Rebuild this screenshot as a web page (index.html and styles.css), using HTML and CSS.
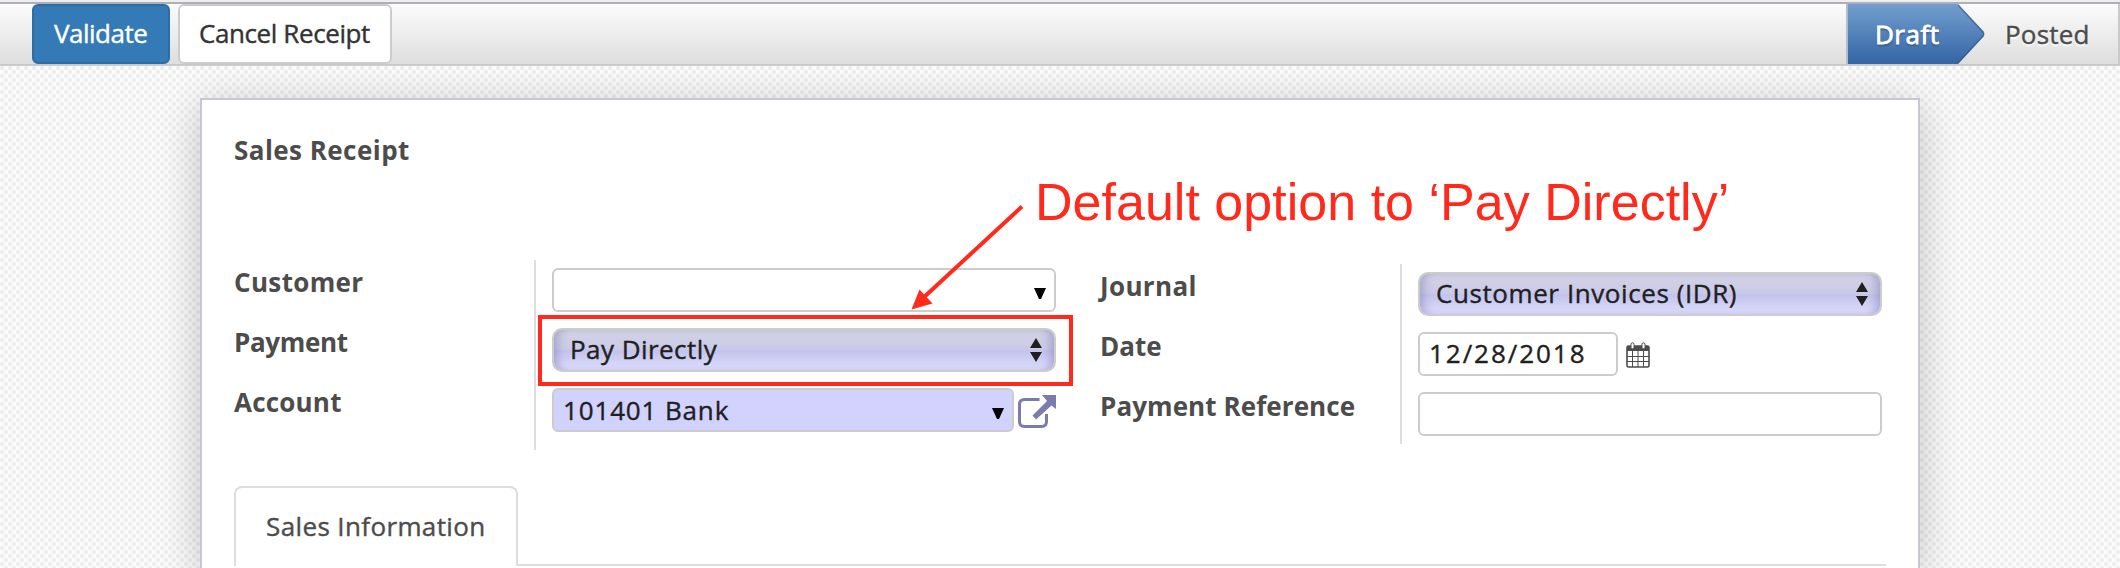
FILE: index.html
```
<!DOCTYPE html>
<html lang="en">
<head>
<meta charset="utf-8">
<title>Sales Receipt</title>
<link rel="stylesheet" href="styles.css">
</head>
<body>
<header class="toolbar">
  <div class="actions">
    <button class="btn btn-primary"><span class="t-validate">Validate</span></button>
    <button class="btn"><span class="t-cancel">Cancel Receipt</span></button>
  </div>
  <div class="status">
    <div class="stage stage-active"><span class="t-draft">Draft</span>
      <svg class="stage-arrow" width="28" height="60" viewBox="0 0 28 60">
        <defs><linearGradient id="stage" x1="0" y1="0" x2="0" y2="1"><stop offset="0" stop-color="#729fcf"/><stop offset="1" stop-color="#3465a4"/></linearGradient></defs>
        <path d="M0 0 25.500 27.500Q27 30 25.500 32.500L0 60Z" fill="url(#stage)"/>
        <path d="M0 1 25 28Q26.500 30 25 32L0 59" fill="none" stroke="#2c4f7c" stroke-opacity=".55" stroke-width="1.500"/>
      </svg>
    </div>
    <div class="stage stage-next"><span class="t-posted">Posted</span></div>
  </div>
</header>
<main class="page">
  <section class="sheet">
    <h1 class="title"><span class="t-title">Sales Receipt</span></h1>
    <div class="groups">
      <div class="group group-left">
        <div class="labels">
          <label><span class="t-customer">Customer</span></label>
          <label><span class="t-payment">Payment</span></label>
          <label><span class="t-account">Account</span></label>
        </div>
        <div class="fields">
          <div class="field field-end"><svg class="caret" width="14" height="13" viewBox="0 0 14 13"><path d="M1 1H13L8 12H6Z"/></svg></div>
          <div class="field select"><span class="t-pay">Pay Directly</span><svg class="updown" width="12" height="24" viewBox="0 0 12 24"><path d="M6 0 12 10H0ZM0 14H12L6 24Z"/></svg></div>
          <div class="row">
            <div class="field field-required"><span class="t-bank">101401 Bank</span><svg class="caret" width="14" height="13" viewBox="0 0 14 13"><path d="M1 1H13L8 12H6Z"/></svg></div>
            <svg class="open" width="38" height="34" viewBox="0 0 38 34"><path d="M21.500 4.500H6.500Q1.500 4.500 1.500 9.500V26.500Q1.500 31.500 6.500 31.500H23.500Q28.500 31.500 28.500 26.500V19" fill="none" stroke="#7c7bad" stroke-width="3"/><path d="M24 0H38V14L33.500 10.500 18 24.500 14.500 20.500 29 6Z" fill="#7c7bad"/></svg>
          </div>
        </div>
      </div>
      <div class="group group-right">
        <div class="labels">
          <label><span class="t-journal">Journal</span></label>
          <label><span class="t-date">Date</span></label>
          <label><span class="t-ref">Payment Reference</span></label>
        </div>
        <div class="fields">
          <div class="field select"><span class="t-invoices">Customer Invoices (IDR)</span><svg class="updown" width="12" height="24" viewBox="0 0 12 24"><path d="M6 0 12 10H0ZM0 14H12L6 24Z"/></svg></div>
          <div class="row">
            <div class="field field-date"><span class="t-day">12/28/2018</span></div>
            <svg class="calendar" width="24" height="26" viewBox="0 0 24 26"><rect x="1" y="4" width="22" height="21" rx="1.500" fill="#fff" stroke="#4c4c4c" stroke-width="1.600"/><path d="M1 4H23V9H1Z" fill="#4c4c4c"/><path d="M6.500 9V25M12 9V25M17.500 9V25M1 14.500H23M1 19.500H23" stroke="#4c4c4c"/><rect x="5" y=".8" width="3" height="6" rx="1.500" fill="#fff" stroke="#4c4c4c"/><rect x="16" y=".8" width="3" height="6" rx="1.500" fill="#fff" stroke="#4c4c4c"/></svg>
          </div>
          <div class="field"></div>
        </div>
      </div>
    </div>
    <div class="tabs"><div class="tab"><span class="t-tab">Sales Information</span></div><div class="tabs-rest"></div></div>
  </section>
</main>
<div class="callout-box"></div>
<svg class="callout-arrow" width="120" height="112" viewBox="908 202 120 112"><path d="M1022 206.500 922 299" stroke="#ff2a1c" stroke-width="4"/><path d="M911.500 309.500 919.500 289.500 932.500 303.500Z" fill="#ff2a1c"/></svg>
<div class="callout-text"><span class="t-note">Default option to ‘Pay Directly’</span></div>
</body>
</html>
```

FILE: styles.css
```
* { box-sizing: border-box; }
html { background: #eee; }
body {
  margin: 0;
  height: 568px;
  padding-top: 2px;
  overflow: hidden;
  position: relative;
  font: 26px/30px "Open Sans", "Noto Sans", sans-serif;
  color: #4c4c4c;
}
span { white-space: nowrap; }
svg { display: block; flex: none; }

/* Letter spacing per text */
.t-validate { letter-spacing: -.5px; }
.t-cancel { letter-spacing: -.4px; }
.t-draft { letter-spacing: .5px; }
.t-posted { letter-spacing: .2px; }
.t-title { letter-spacing: .45px; }
.t-customer { letter-spacing: .35px; }
.t-payment { letter-spacing: -.35px; }
.t-account { letter-spacing: .2px; }
.t-journal { letter-spacing: .35px; }
.t-ref { letter-spacing: .08px; }
.t-pay { letter-spacing: .45px; }
.t-bank { letter-spacing: .85px; }
.t-invoices { letter-spacing: .58px; }
.t-day { letter-spacing: 1.95px; }
.t-tab { letter-spacing: .38px; }
.t-note { letter-spacing: .02px; }

.toolbar {
  height: 64px;
  display: flex;
  justify-content: space-between;
  background: linear-gradient(#fcfcfc, #dedede);
  border-top: 2px solid #afafb6;
  border-bottom: 2px solid #cacaca;
}
.actions { display: flex; gap: 8px; padding-left: 32px; }
.btn, .status, .fields, .tab { -webkit-text-stroke: .4px currentColor; }
.btn {
  height: 60px;
  font: inherit;
  color: #333;
  background: #fff;
  border: 2px solid #ccc;
  border-radius: 6px;
  padding: 0 0 3px 19px;
  width: 214px;
  text-align: left;
}
.btn-primary { width: 138px; padding-left: 20px; color: #fff; background: #337ab7; border-color: #2e6da4; }
.status { display: flex; width: 274px; border-right: 2px solid #cacaca; }
.stage { height: 60px; display: flex; align-items: center; padding-bottom: 1px; }
.stage-active {
  position: relative;
  width: 112px;
  padding-left: 27px;
  color: #fff;
  text-shadow: 0 2px 2px rgba(0, 0, 0, .3);
  background: linear-gradient(#729fcf, #3465a4);
  border-left: 2px solid #b4bccb;
}
.t-draft { -webkit-text-stroke: .8px #fff; }
.stage-arrow { position: absolute; left: 110px; top: 0; }
.stage-next { padding-left: 47px; text-shadow: 0 2px 2px #fff; }

.page {
  height: 502px;
  overflow: hidden;
  padding: 32px 200px 0;
  background:
    radial-gradient(circle at 2px 2px, #ebebeb 1px, transparent 3px) 0 0 / 8px 8px,
    radial-gradient(circle at 6px 6px, #ebebeb 1px, transparent 3px) 0 0 / 8px 8px,
    #fdfdfd;
}
.sheet {
  height: 470px;
  padding: 0 32px;
  background: #fff;
  border: 2px solid #c8c8d3;
  border-bottom: 0;
  box-shadow: 0 8px 40px rgba(0, 0, 0, .22);
}
.title { margin: 0; padding-top: 35px; font: inherit; font-weight: 700; }
.groups { display: flex; margin-top: 95px; }
.group { display: flex; }
.group-left { width: 866px; height: 190px; }
.group-right { margin-top: 4px; height: 180px; }
.labels {
  width: 302px;
  display: flex;
  flex-direction: column;
  gap: 30px;
  padding-top: 7px;
  border-right: 2px solid #ddd;
  font-weight: 700;
}
.labels label { height: 30px; }
.fields { display: flex; flex-direction: column; gap: 16px; padding: 8px 0 0 16px; width: 520px; }
.group-right .fields { width: 480px; }
.row { display: flex; }
.field {
  height: 44px;
  flex: none;
  display: flex;
  align-items: center;
  justify-content: space-between;
  padding: 0 7px 2px 9px;
  color: #1f1f1f;
  background: #fff;
  border: 2px solid #ccc;
  border-radius: 6px;
}
.field-end { justify-content: flex-end; }
.field-required { width: 462px; background: #d2d2ff; }
.field-required span { padding-top: 2px; }
.field-date { width: 200px; }
.caret { margin-top: 8px; fill: #000; }
.select {
  border-radius: 10px;
  padding: 0 12px 2px 16px;
  background: linear-gradient(#d2d2e4, #cacae8 50%, #c2c2ea 50%, #dedeff);
  box-shadow: inset 8px 0 8px -4px rgba(110, 110, 170, .4), inset -8px 0 8px -4px rgba(110, 110, 170, .4);
}
.updown { fill: #1f1f1f; margin-top: 2px; }
.open { margin: 7px 0 0 4px; }
.calendar { margin: 10px 0 0 8px; }

.tabs { display: flex; margin-top: 36px; height: 80px; }
.tab {
  width: 284px;
  padding: 23px 0 0 30px;
  border: 2px solid #ddd;
  border-bottom: 0;
  border-radius: 8px 8px 0 0;
}
.tabs-rest { flex: 1; border-bottom: 2px solid #ddd; }

.callout-box { position: absolute; left: 538px; top: 315px; width: 535px; height: 71px; border: 4px solid #ff2a1c; }
.callout-arrow { position: absolute; left: 908px; top: 202px; }
.callout-text { position: absolute; left: 1035px; top: 172px; font: 52px/60px "Liberation Sans", Arial, sans-serif; color: #ff2a1c; }
```
